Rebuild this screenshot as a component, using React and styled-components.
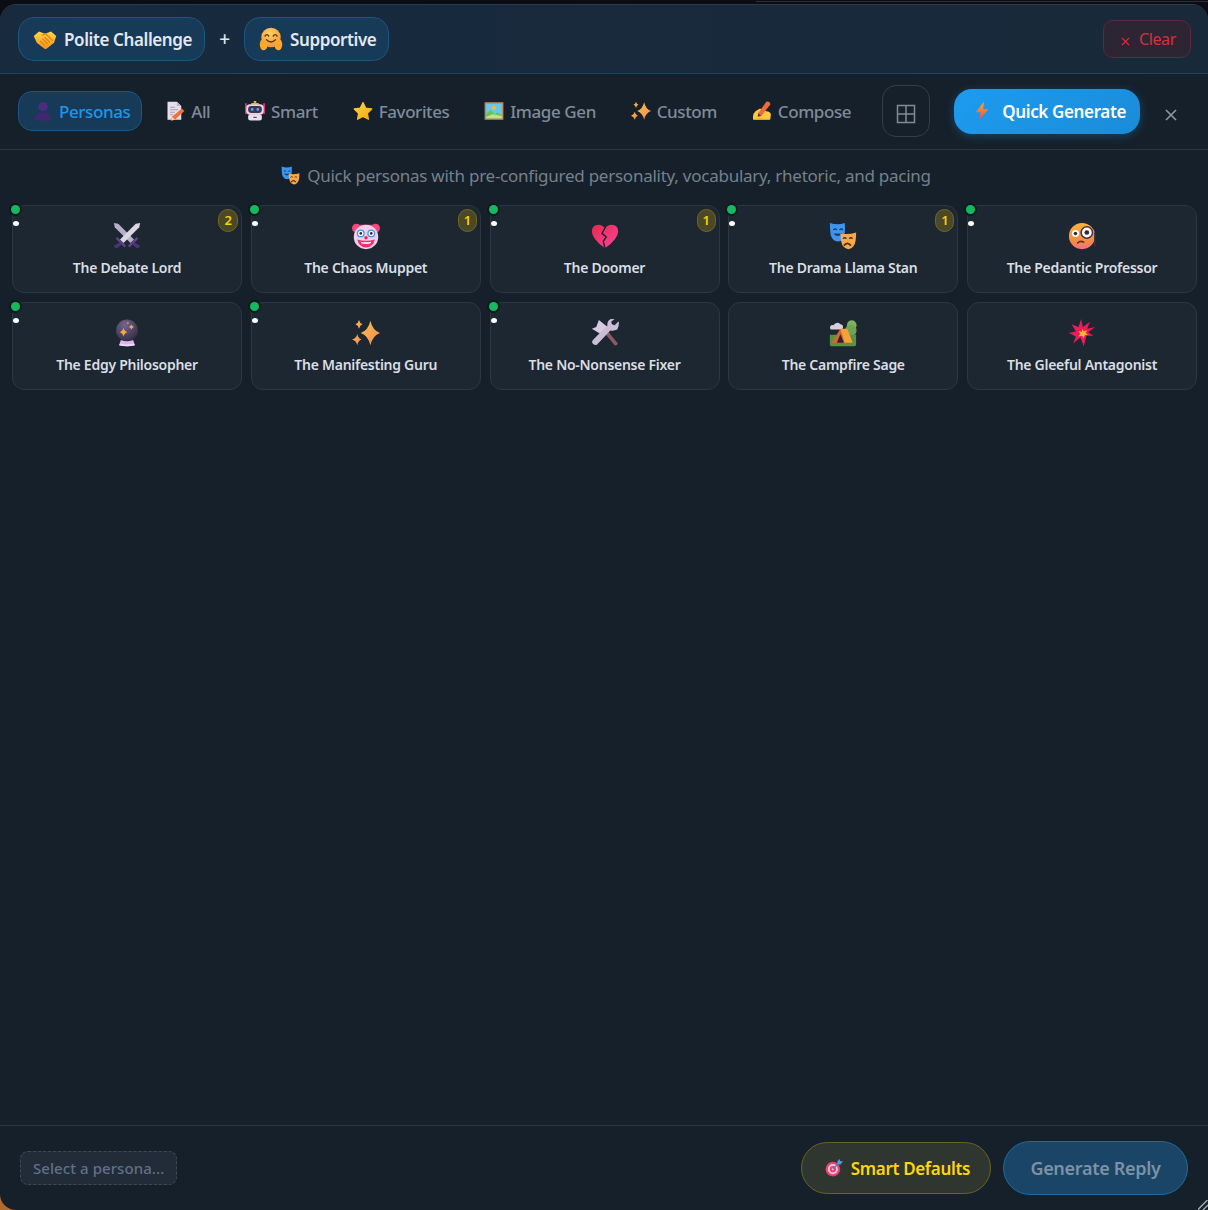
import React from 'react'
import styled, { createGlobalStyle } from 'styled-components'

const Global = createGlobalStyle`
	html, body { margin: 0; padding: 0; background: #0b0d12; }
	* { box-sizing: border-box; }
	#root { width: 1208px; height: 1210px; }
`

const FONT = '"Noto Sans", "Open Sans", "Liberation Sans", sans-serif'

const Page = styled.div`
	position: relative;
	width: 1208px;
	height: 1210px;
	padding-top: 4px;
	overflow: hidden;
	background:
		linear-gradient(#2b2e34, #2b2e34) 756px 1px / 452px 1px no-repeat,
		radial-gradient(circle at 0 100%, #b5692c 0, #b5692c 18px, #0b0d12 19px);
	font-family: ${FONT};
`

const Panel = styled.div`
	display: flex;
	flex-direction: column;
	height: 1206px;
	background: #16202a;
	border-top: 1px solid #2c3b49;
	border-radius: 16px 16px 0 16px;
	overflow: hidden;
`

const Header = styled.div`
	display: flex;
	align-items: center;
	height: 69px;
	flex: none;
	padding: 0 17px 0 18px;
	background: linear-gradient(90deg, #172a3e, #18293a);
	border-bottom: 1px solid #1d4460;
`

const Chip = styled.div`
	display: flex;
	align-items: center;
	gap: 7px;
	height: 44px;
	padding: 0 12px 0 14px;
	border: 1px solid #1d5680;
	border-radius: 16px;
	background: #173a58;
	color: #e4e8ee;
	font-size: 17px;
	font-weight: 600;
	letter-spacing: -0.4px;
`

const Plus = styled.span`
	width: 39px;
	text-align: center;
	color: #e4e8ee;
	font-size: 19px;
	font-weight: 500;
`

const ClearButton = styled.div`
	display: flex;
	align-items: center;
	gap: 9px;
	height: 38px;
	margin-left: auto;
	padding: 0 14px 0 17px;
	border: 1px solid #5c2a38;
	border-radius: 10px;
	background: #2e2534;
	color: #d6303f;
	font-size: 16px;
	letter-spacing: -0.35px;
`

const ClearIcon = styled.svg`
	margin-top: 4px;
`

const TabBar = styled.div`
	display: flex;
	align-items: center;
	height: 76px;
	flex: none;
	padding: 0 0 1px 18px;
	border-bottom: 1px solid #2a3641;
`

const Tabs = styled.div`
	display: flex;
	align-items: center;
	gap: 7.75px;
`

const Tab = styled.div`
	display: flex;
	align-items: center;
	gap: 6px;
	height: 40px;
	padding: 0 11px 0 14px;
	border: 1px solid ${p => (p.$active ? '#1d5680' : 'transparent')};
	border-radius: 14px;
	background: ${p => (p.$active ? '#173a58' : 'transparent')};
	color: ${p => (p.$active ? '#1e96ea' : '#7f8b98')};
	font-size: 17px;
	font-weight: 500;
	letter-spacing: -0.4px;
`

const TabIcon = styled.span`
	display: flex;
	justify-content: center;
	width: 20px;
`

const GridButton = styled.div`
	display: flex;
	align-items: center;
	justify-content: center;
	width: 48px;
	height: 52px;
	margin-left: 19px;
	padding-top: 6px;
	border: 1px solid #333e49;
	border-radius: 14px;
	color: #7f8b98;
`

const QuickButton = styled.div`
	display: flex;
	align-items: center;
	gap: 10px;
	width: 186px;
	height: 45px;
	margin-left: 24px;
	padding-left: 18px;
	border-radius: 18px;
	background: linear-gradient(135deg, #1d9bf0, #1a8cd8);
	box-shadow: 0 2px 10px rgba(29, 155, 240, 0.3);
	color: #fff;
	font-size: 17px;
	font-weight: 600;
	letter-spacing: -0.36px;
`

const CloseButton = styled.div`
	display: flex;
	margin: 7px 0 0 25px;
	color: #8b96a2;
`

const Hint = styled.div`
	display: flex;
	align-items: center;
	justify-content: center;
	gap: 7px;
	height: 55px;
	flex: none;
	padding: 0 0 5px 4px;
	color: #75808c;
	font-size: 17px;
	letter-spacing: -0.25px;
`

const Grid = styled.div`
	display: grid;
	grid-template-columns: repeat(5, 230px);
	grid-auto-rows: 88px;
	gap: 9px 8.75px;
	padding: 0 11px 0 12px;
`

const Card = styled.div`
	position: relative;
	display: flex;
	flex-direction: column;
	align-items: center;
	padding-top: 16px;
	border: 1px solid #2c3742;
	border-radius: 12px;
	background: #1d2731;
	color: #d9dee4;
	font-size: 14px;
	font-weight: 600;
	letter-spacing: -0.27px;
`

const CardTitle = styled.div`
	margin-top: 8px;
	line-height: 20px;
`

const GreenDot = styled.span`
	position: absolute;
	top: -1px;
	left: -2px;
	width: 9px;
	height: 9px;
	border-radius: 50%;
	background: #16b95e;
	box-shadow: 0 0 0 2px #101820;
`

const WhiteDot = styled.span`
	position: absolute;
	top: 15px;
	left: 0;
	width: 6px;
	height: 5px;
	border-radius: 50%;
	background: #fff;
`

const Badge = styled.span`
	position: absolute;
	top: 3px;
	right: 3px;
	display: flex;
	align-items: center;
	justify-content: center;
	width: ${p => p.$w}px;
	height: 23px;
	padding-bottom: 1px;
	border: 1px solid #73691c;
	border-radius: 11px;
	background: #4a4826;
	color: #f5d400;
	font-size: 13px;
	font-weight: 600;
`

const Spacer = styled.div`
	flex: 1;
`

const Footer = styled.div`
	display: flex;
	align-items: center;
	height: 85px;
	flex: none;
	padding: 0 20px;
	border-top: 1px solid #2a3641;
`

const Status = styled.div`
	display: flex;
	align-items: center;
	height: 34px;
	padding: 0 12px;
	border: 1px dashed #3d4a58;
	border-radius: 8px;
	background: #222b38;
	color: #5f7187;
	font-size: 15px;
	font-weight: 500;
	letter-spacing: 0.07px;
`

const SmartButton = styled.div`
	display: flex;
	align-items: center;
	gap: 8px;
	height: 52px;
	margin-left: auto;
	padding: 0 20px 0 23px;
	border: 1px solid #6b621b;
	border-radius: 26px;
	background: #2f362f;
	color: #ffd60a;
	font-size: 17px;
	font-weight: 600;
	letter-spacing: -0.34px;
`

const GenerateButton = styled.div`
	display: flex;
	align-items: center;
	justify-content: center;
	width: 185px;
	height: 54px;
	margin: 0 0 0 12px;
	border: 1px solid #1f6a9f;
	border-radius: 27px;
	background: #1a4566;
	color: #7c92a6;
	font-size: 18px;
	font-weight: 600;
	letter-spacing: -0.3px;
`

const Grip = styled.svg`
	position: absolute;
	right: 0;
	bottom: 0;
`

// every emoji of the screenshot, drawn on a 32x32 box
const EMOJI = {
	handshake: <>
		<defs><linearGradient id="hs" x1="0" y1="0" x2="0" y2="1"><stop offset="0" stopColor="#ffd54a" /><stop offset="1" stopColor="#f59418" /></linearGradient></defs>
		<path d="M1 12 8 6l8 3 8-3 7 6-3 9-10 8q-2 1-4-1l-9-7z" fill="url(#hs)" />
		<path d="M12 11l5-2 9 9M10 19l5 5M13 16l6 6M16 14l6 6" stroke="#e57f12" strokeWidth="1.6" fill="none" strokeLinecap="round" />
	</>,
	hug: <>
		<defs><radialGradient id="hg" cx=".45" cy=".3" r=".8"><stop offset="0" stopColor="#ffd25a" /><stop offset="1" stopColor="#f58a3c" /></radialGradient></defs>
		<circle cx="16" cy="14" r="13" fill="url(#hg)" />
		<path d="M8 12q2.500-3.500 5 0M19 12q2.500-3.500 5 0" stroke="#5a3020" strokeWidth="1.8" fill="none" strokeLinecap="round" />
		<path d="M10 17q6 6 12 0" stroke="#5a3020" strokeWidth="1.8" fill="none" strokeLinecap="round" />
		<path d="M1 24q0-7 4-8t5 3l1 7q-1 5-5 5t-5-7zM31 24q0-7-4-8t-5 3l-1 7q1 5 5 5t5-7z" fill="#ffa726" />
	</>,
	person: <>
		<circle cx="16" cy="9" r="7.500" fill="#4a2d7c" />
		<path d="M3 30q0-12 13-12t13 12q0 1-2 1H5q-2 0-2-1z" fill="#412672" />
	</>,
	memo: <>
		<path d="M4 1h15l7 7v22H4z" fill="#e6dfe9" />
		<path d="M19 1l7 7h-7z" fill="#bdb3c6" />
		<path d="M8 10h8M8 14h13M8 18h8M8 22h5" stroke="#a49ab0" strokeWidth="1.500" />
		<path d="M27 12l4 4-15 14-6 1 1-6z" fill="#f0743a" />
		<path d="M11 25l5 5-6 1z" fill="#ffd1a8" />
	</>,
	robot: <>
		<rect x="14" y="0" width="4" height="3" fill="#f5b93a" />
		<path d="M10 3h12v3H10z" fill="#e8aa48" />
		<rect x="0" y="3" width="3" height="18" rx="1.500" fill="#d8356f" />
		<rect x="29" y="3" width="3" height="18" rx="1.500" fill="#d8356f" />
		<rect x="2" y="5" width="28" height="17" rx="6" fill="#e5d5ea" />
		<rect x="5" y="8" width="22" height="11" rx="5" fill="#3d3556" />
		<circle cx="11.500" cy="13.500" r="2.200" fill="#45b4f2" />
		<circle cx="20.500" cy="13.500" r="2.200" fill="#45b4f2" />
		<rect x="5" y="21" width="22" height="10" rx="4" fill="#ecdcee" />
		<rect x="13" y="25" width="6" height="2" rx="1" fill="#5f4c7c" />
	</>,
	star: <>
		<defs><linearGradient id="st" x1="0" y1="0" x2="1" y2="1"><stop offset="0" stopColor="#ffd53e" /><stop offset="1" stopColor="#f4a916" /></linearGradient></defs>
		<path d="M16 2.500l4.300 8.800 9.700 1.400-7 6.800 1.700 9.700L16 24.600l-8.700 4.600L9 19.500l-7-6.800 9.700-1.400z" fill="url(#st)" stroke="url(#st)" strokeWidth="2" strokeLinejoin="round" />
	</>,
	picture: <>
		<rect x="1" y="2" width="30" height="28" fill="#c98a58" />
		<rect x="3.500" y="4.500" width="25" height="23" fill="#63c9ef" />
		<circle cx="16" cy="11" r="3.500" fill="#f6b73c" />
		<path d="M3.500 21l7-7 7 8 4-4 7 5v4.500h-25z" fill="#6cc24a" />
		<path d="M3.500 25l10-4 15 3v3.500h-25z" fill="#bfe38d" />
	</>,
	sparkles: <>
		<defs><linearGradient id="sp" x1="0" y1="0" x2="1" y2="1"><stop offset="0" stopColor="#ffc440" /><stop offset="1" stopColor="#f2865c" /></linearGradient></defs>
		<path d="M21 2q2.500 11 11 14-8.500 3-11 14-2.500-11-11-14 8.500-3 11-14z" fill="url(#sp)" />
		<path d="M8 1q1 3.800 4 5-3 1-4 5-1-4-4-5 3-1.200 4-5zM6 17q1 5 5 6.500-4 1.500-5 6.500-1-5-6-6.500 5-1.500 6-6.500z" fill="url(#sp)" />
	</>,
	writing: <>
		<path d="M2 30q-2-9 4-14l7-4 5 3 9 2q4 2 3 7l-1 6z" fill="#ffc83d" />
		<path d="M2 30q8-3 13-2l14 2z" fill="#f5a623" />
		<path d="M10 19L23 1q3-1 5 1 2 2 1 4L15 24z" fill="#ef6a3c" />
		<path d="M10 19l5 5-6 1z" fill="#5a3a36" />
	</>,
	bolt: <>
		<defs><linearGradient id="bl" x1="0" y1="0" x2="0" y2="1"><stop offset="0" stopColor="#ffa92e" /><stop offset="1" stopColor="#ee4a45" /></linearGradient></defs>
		<path d="M19 1L6 18h8l-3 13 15-18h-8z" fill="url(#bl)" />
	</>,
	swords: <>
		<path d="M1 1l5 1 18 18-4 4L2 6z" fill="#b9aec8" />
		<path d="M31 1l-5 1L8 20l4 4L30 6z" fill="#dcd5e4" />
		<path d="M5 17l10 10-2 2L3 19zM27 17L17 27l2 2 10-10z" fill="#5c4390" />
		<path d="M8 23l2 2-5 5-3-1-1-2zM24 23l-2 2 5 5 3-1 1-2z" fill="#4b3578" />
	</>,
	clown: <>
		<circle cx="5" cy="7" r="5" fill="#f7477c" />
		<circle cx="27" cy="7" r="5" fill="#f7477c" />
		<path d="M7 3h18v4H7z" fill="#f7477c" />
		<circle cx="16" cy="17" r="14" fill="#eed0ee" />
		<circle cx="10" cy="13" r="4.500" fill="#4a90e8" />
		<circle cx="22" cy="13" r="4.500" fill="#4a90e8" />
		<circle cx="10" cy="13" r="3" fill="#fff" />
		<circle cx="22" cy="13" r="3" fill="#fff" />
		<circle cx="10" cy="13" r="1.500" fill="#33273f" />
		<circle cx="22" cy="13" r="1.500" fill="#33273f" />
		<circle cx="16" cy="18" r="2" fill="#e72a5a" />
		<path d="M6 20q10 3 20 0-2 9-10 9T6 20z" fill="#f32e6c" />
		<path d="M10 22.500q6 1.500 12 0l-1 2q-5 1-10 0z" fill="#fff" />
	</>,
	heart: <>
		<defs><linearGradient id="ht" x1="0" y1="0" x2="1" y2="1"><stop offset="0" stopColor="#e9264f" /><stop offset="1" stopColor="#f8479b" /></linearGradient></defs>
		<path d="M16 30Q1 19 1 11 1 3 8.500 3 13 3 16 7q3-4 7.500-4Q31 3 31 11q0 8-15 19z" fill="url(#ht)" />
		<path d="M16.500 6l-4 7 5 4-3.500 5 2 8" stroke="#16202a" strokeWidth="1.500" fill="none" />
	</>,
	masks: <>
		<path d="M1 1q9 3 17 0 1 14-2 18-3 4-7 3-5-1-7-7-1-6-1-14z" fill="#3f94ee" />
		<path d="M5 9q2-2 4 0M12 9q2-2 4 0" stroke="#173e70" strokeWidth="1.500" fill="none" />
		<path d="M5 13q5 6 10 0z" fill="#173e70" />
		<path d="M13 13q9 2 18-1 0 10-2 14-3 5-7 5-5-1-7-5-2-5-2-13z" fill="#f7a84a" />
		<path d="M16 19q2-2 4 0M23 19q2-2 4 0" stroke="#4d2d1a" strokeWidth="1.500" fill="none" />
		<path d="M17 27q4-5 8 0" stroke="#4d2d1a" strokeWidth="2" fill="none" />
	</>,
	monocle: <>
		<defs><linearGradient id="mn" x1="0" y1="0" x2="0" y2="1"><stop offset="0" stopColor="#fdb33d" /><stop offset=".7" stopColor="#f78a42" /><stop offset="1" stopColor="#f3708a" /></linearGradient></defs>
		<circle cx="16" cy="16" r="15" fill="url(#mn)" />
		<path d="M30.500 12v16" stroke="#44304a" strokeWidth="1.500" />
		<circle cx="8.500" cy="13" r="4" fill="#fff" />
		<circle cx="8.500" cy="13" r="2" fill="#3b2530" />
		<circle cx="21.500" cy="12" r="6.500" fill="#fff" stroke="#44304a" strokeWidth="1.800" />
		<circle cx="21.500" cy="12" r="2.700" fill="#3b2530" />
		<path d="M11 24q3-3 7-1" stroke="#5a3020" strokeWidth="1.800" fill="none" strokeLinecap="round" />
	</>,
	ball: <>
		<defs><radialGradient id="bb" cx=".4" cy=".25" r=".85"><stop offset="0" stopColor="#75668a" /><stop offset="1" stopColor="#2e2640" /></radialGradient></defs>
		<circle cx="16" cy="13" r="12.500" fill="url(#bb)" />
		<path d="M12 10q.8 4 4.500 5-3.700.8-4.500 5-.8-4.200-4.500-5 3.700-1 4.500-5zM21 6q.5 2.500 3 3-2.500.5-3 3-.5-2.500-3-3 2.500-.5 3-3zM17 3q.3 1.200 1.500 1.500Q17.300 4.800 17 6q-.3-1.200-1.500-1.500Q16.700 4.200 17 3z" fill="#f7a93f" />
		<path d="M9 24q7 3 14 0l2 6q-9 2-18 0z" fill="#d9b8e8" />
		<path d="M8 28q8 2 16 0l1 2q-9 2-18 0z" fill="#f0dcf5" />
	</>,
	tools: <>
		<path d="M13 13L27 30q2 1 3-1 1-1 0-2L16 10z" fill="#8c5b62" />
		<path d="M9 1l10 8-8 8-10-6 5-2z" fill="#d8cbe0" />
		<path d="M31 3l-4 4-3-1-1-3 4-3q-5-1-7 2-2 3-1 5L3 23q-3 3-1 5 3 3 5 1l15-16q4 1 8-1 2-3 2-9z" fill="#c9bdd8" />
	</>,
	camp: <>
		<circle cx="26" cy="7" r="5.500" fill="#7db35c" />
		<circle cx="25" cy="13" r="6.500" fill="#6fa552" />
		<path d="M2 12a3 3 0 0 1 3-5 5 5 0 0 1 8-1 3 3 0 0 1 0 6z" fill="#d6d0dc" />
		<path d="M1 18h30v11q0 2-2 2H3q-2 0-2-2z" fill="#5a9142" />
		<path d="M13 11h8l6 16H10z" fill="#f6a13a" />
		<path d="M13 11L3 27h15z" fill="#e0632e" />
		<path d="M13 17l-4 10h8z" fill="#2b2430" />
	</>,
	burst: <>
		<path d="M15 0l2 9 8-6-3 8 9-2-8 6 6 4-8 0-3 12-4-10-8 7 3-8-8-4 8-2-5-8 8 3z" fill="#ea1a5c" />
		<path d="M16 11l2 3 4-1-2 3 3 2-4 .5-1 3.500-2-3-4 1 2-3-2-3 4 .5z" fill="#ffb52e" />
	</>,
	target: <>
		<circle cx="14" cy="18" r="13" fill="#ee3e73" />
		<circle cx="14" cy="18" r="9" fill="#f6c6d8" />
		<circle cx="14" cy="18" r="5.500" fill="#ee3e73" />
		<circle cx="14" cy="18" r="2" fill="#f6c6d8" />
		<path d="M14 18L26 6" stroke="#3a86d8" strokeWidth="2.500" />
		<path d="M22 4l4-4 1 4 5 0-5 6-5-1z" fill="#4aa3ec" />
	</>,
}

const Emoji = ({ name, size }) => (
	<svg width={size} height={size} viewBox="0 0 32 32">{EMOJI[name]}</svg>
)

const TABS = [
	['person', 'Personas', true],
	['memo', 'All'],
	['robot', 'Smart'],
	['star', 'Favorites'],
	['picture', 'Image Gen'],
	['sparkles', 'Custom'],
	['writing', 'Compose'],
]

const PERSONAS = [
	{ icon: 'swords', name: 'The Debate Lord', dots: true, count: 2 },
	{ icon: 'clown', name: 'The Chaos Muppet', dots: true, count: 1 },
	{ icon: 'heart', name: 'The Doomer', dots: true, count: 1 },
	{ icon: 'masks', name: 'The Drama Llama Stan', dots: true, count: 1 },
	{ icon: 'monocle', name: 'The Pedantic Professor', dots: true },
	{ icon: 'ball', name: 'The Edgy Philosopher', dots: true },
	{ icon: 'sparkles', name: 'The Manifesting Guru', dots: true },
	{ icon: 'tools', name: 'The No-Nonsense Fixer', dots: true },
	{ icon: 'camp', name: 'The Campfire Sage' },
	{ icon: 'burst', name: 'The Gleeful Antagonist' },
]

const App = () => (
	<Page>
		<Global />
		<Panel>
			<Header>
				<Chip><Emoji name="handshake" size={24} />Polite Challenge</Chip>
				<Plus>+</Plus>
				<Chip><Emoji name="hug" size={24} />Supportive</Chip>
				<ClearButton>
					<ClearIcon width="9" height="9" viewBox="0 0 10 10" stroke="currentColor" strokeWidth="1.4"><path d="M1 1l8 8M9 1l-8 8" /></ClearIcon>
					Clear
				</ClearButton>
			</Header>
			<TabBar>
				<Tabs>
					{TABS.map(([icon, label, active]) => (
						<Tab key={label} $active={active}>
							<TabIcon><Emoji name={icon} size={20} /></TabIcon>
							{label}
						</Tab>
					))}
				</Tabs>
				<GridButton>
					<svg width="20" height="20" viewBox="0 0 20 20" fill="none" stroke="currentColor" strokeWidth="1.5"><rect x="1.500" y="1.500" width="17" height="17" /><path d="M10 1.500v17M1.500 10h17" /></svg>
				</GridButton>
				<QuickButton><Emoji name="bolt" size={20} />Quick Generate</QuickButton>
				<CloseButton>
					<svg width="12" height="12" viewBox="0 0 12 12" stroke="currentColor" strokeWidth="1.7"><path d="M1 1l10 10M11 1L1 11" /></svg>
				</CloseButton>
			</TabBar>
			<Hint>
				<Emoji name="masks" size={19} />
				Quick personas with pre-configured personality, vocabulary, rhetoric, and pacing
			</Hint>
			<Grid>
				{PERSONAS.map(p => (
					<Card key={p.name}>
						{p.dots && <GreenDot />}
						{p.dots && <WhiteDot />}
						{p.count && <Badge $w={p.count === 2 ? 20 : 19}>{p.count}</Badge>}
						<Emoji name={p.icon} size={28} />
						<CardTitle>{p.name}</CardTitle>
					</Card>
				))}
			</Grid>
			<Spacer />
			<Footer>
				<Status>Select a persona...</Status>
				<SmartButton><Emoji name="target" size={18} />Smart Defaults</SmartButton>
				<GenerateButton>Generate Reply</GenerateButton>
			</Footer>
		</Panel>
		<Grip width="10" height="10" viewBox="0 0 10 10" stroke="#a8adb3" strokeWidth="1.400">
			<path d="M0 9.500L9.500 0M5 10l5-5" />
		</Grip>
	</Page>
)

export default App
